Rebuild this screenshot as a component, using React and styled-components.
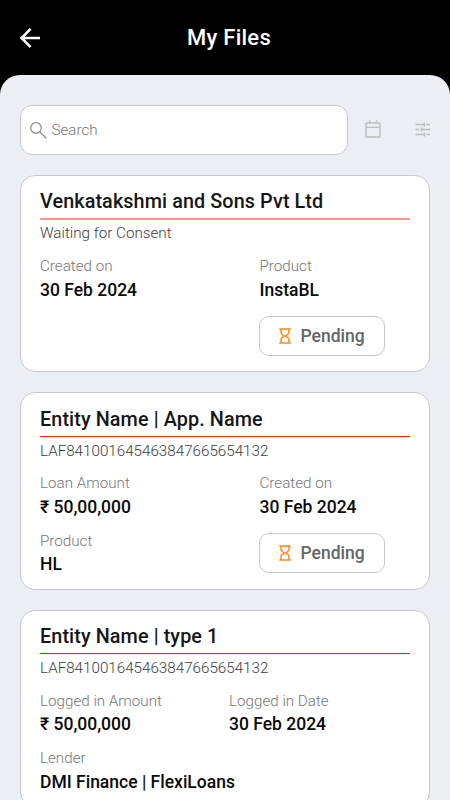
import styled, { createGlobalStyle } from "styled-components";

const files = [
  {
    title: "Venkatakshmi and Sons Pvt Ltd",
    subtitle: "Waiting for Consent",
    softLine: true,
    column: 219.5,
    fields: [
      { label: "Created on", value: "30 Feb 2024" },
      { label: "Product", value: "InstaBL" },
      {},
      { status: "Pending" },
    ],
  },
  {
    title: "Entity Name | App. Name",
    subtitle: "LAF841001645463847665654132",
    column: 219.5,
    fields: [
      { label: "Loan Amount", value: "₹ 50,00,000" },
      { label: "Created on", value: "30 Feb 2024" },
      { label: "Product", value: "HL" },
      { status: "Pending" },
    ],
  },
  {
    title: "Entity Name | type 1",
    subtitle: "LAF841001645463847665654132",
    column: 189,
    fields: [
      { label: "Logged in Amount", value: "₹ 50,00,000" },
      { label: "Logged in Date", value: "30 Feb 2024" },
      { label: "Lender", value: "DMI Finance | FlexiLoans" },
    ],
  },
];

function BackIcon() {
  return (
    <svg width="20" height="20" viewBox="0 0 20 20" fill="none">
      <path
        d="M10.6 0.9L1.5 10L10.6 19.1M1.5 10H20"
        stroke="#fff"
        strokeWidth="2.5"
      />
    </svg>
  );
}

function SearchIcon() {
  return (
    <svg width="17" height="17" viewBox="0 0 17 17" fill="none">
      <circle cx="6" cy="6" r="5.3" stroke="#8a8a8a" strokeWidth="1.2" />
      <path d="M9.9 9.9L16.3 16.3" stroke="#8a8a8a" strokeWidth="1.3" />
    </svg>
  );
}

function CalendarIcon() {
  return (
    <svg width="16" height="18" viewBox="0 0 16 18" fill="none">
      <rect
        x="1"
        y="3"
        width="14"
        height="14"
        rx="0.8"
        stroke="#bdbdba"
        strokeWidth="1.4"
      />
      <path d="M1 7.4H15M4.6 0.5V3M11.6 0.5V3" stroke="#bdbdba" strokeWidth="1.3" />
    </svg>
  );
}

function FilterIcon() {
  return (
    <svg width="16" height="15" viewBox="0 0 16 15" fill="none">
      <path
        d="M0.5 2.5H9M11.5 2.5H15M0.5 7.5H4.5M7 7.5H15.5M0.5 12.5H9M11.5 12.5H15M9.4 0.5V4.5M6.7 5.5V9.5M9.4 10.5V14.5"
        stroke="#bdbdba"
        strokeWidth="1.5"
      />
    </svg>
  );
}

function HourglassIcon() {
  return (
    <svg width="12" height="16" viewBox="0 0 12 16" fill="none">
      <path
        d="M0.2 1H11.8M0.2 15H11.8M2 1V4.6C2 6.6 4.8 6.9 4.8 8C4.8 9.1 2 9.4 2 11.4V15M10 1V4.6C10 6.6 7.2 6.9 7.2 8C7.2 9.1 10 9.4 10 11.4V15M4.4 8H7.6"
        stroke="#ff8a12"
        strokeWidth="1.5"
      />
    </svg>
  );
}

function App() {
  return (
    <Wrapper>
      <GlobalStyle />
      <Header>
        <BackButton aria-label="Back">
          <BackIcon />
        </BackButton>
        <Heading>My Files</Heading>
      </Header>
      <Sheet>
        <Toolbar>
          <SearchBox>
            <SearchIcon />
            <SearchInput placeholder="Search" />
          </SearchBox>
          <Tools>
            <IconButton aria-label="Pick a date">
              <CalendarIcon />
            </IconButton>
            <IconButton aria-label="Filter">
              <FilterIcon />
            </IconButton>
          </Tools>
        </Toolbar>
        <List>
          {files.map((file) => (
            <Card key={file.title}>
              <Title $soft={file.softLine}>{file.title}</Title>
              <Subtitle>{file.subtitle}</Subtitle>
              <Fields $column={file.column}>
                {file.fields.map((field, i) =>
                  field.status ? (
                    <Status key={i}>
                      <HourglassIcon />
                      {field.status}
                    </Status>
                  ) : (
                    <Field key={i}>
                      <Label>{field.label}</Label>
                      <Value>{field.value}</Value>
                    </Field>
                  )
                )}
              </Fields>
            </Card>
          ))}
        </List>
      </Sheet>
    </Wrapper>
  );
}

const GlobalStyle = createGlobalStyle`
  * {
    box-sizing: border-box;
  }
  body {
    margin: 0;
    background: #000;
    font-family: Roboto, "Noto Sans", sans-serif;
  }
`;

const Wrapper = styled.div`
  display: flex;
  flex-direction: column;
  width: 450px;
  height: 800px;
  overflow: hidden;
  background: #000;
`;

const Header = styled.header`
  display: grid;
  grid-template-columns: 40px 1fr 40px;
  align-items: center;
  flex: none;
  height: 75px;
  padding: 0 20px;
`;

const BackButton = styled.button`
  display: flex;
  padding: 0;
  border: 0;
  background: none;
`;

const Heading = styled.h1`
  margin: 0;
  padding-left: 8px;
  color: #fff;
  font-size: 22px;
  font-weight: 500;
  letter-spacing: 0.25px;
  line-height: 26px;
  text-align: center;
`;

const Sheet = styled.main`
  flex: 1;
  min-height: 0;
  padding: 30px 20px 0;
  border-radius: 20px 20px 0 0;
  background: #ebeef3;
  overflow: hidden;
`;

const Toolbar = styled.div`
  display: flex;
  align-items: center;
  height: 50px;
`;

const SearchBox = styled.label`
  display: flex;
  align-items: center;
  gap: 4.5px;
  width: 328px;
  height: 50px;
  padding: 0 9px;
  border: 1px solid #c8c8c8;
  border-radius: 12px;
  background: #fff;
`;

const SearchInput = styled.input`
  flex: 1;
  min-width: 0;
  padding: 0;
  border: 0;
  outline: 0;
  font-family: inherit;
  font-size: 15.2px;
  font-weight: 300;
  &::placeholder {
    color: #777;
    opacity: 1;
  }
`;

const Tools = styled.div`
  display: flex;
  flex: 1;
  align-items: center;
  justify-content: space-between;
  margin: -2px -1px 0 17px;
`;

const IconButton = styled.button`
  display: flex;
  padding: 0;
  border: 0;
  background: none;
`;

const List = styled.div`
  display: flex;
  flex-direction: column;
  gap: 20px;
  padding-top: 20.2px;
`;

const Card = styled.article`
  flex: none;
  height: 197.3px;
  padding: 11.25px 19px 0;
  border: 1px solid #c8c8c8;
  border-radius: 15px;
  background: #fff;
`;

const Title = styled.h2`
  height: ${(props) => (props.$soft ? 33 : 32)}px;
  margin: 0 0 ${(props) => (props.$soft ? 4 : 5)}px;
  border-bottom: ${(props) =>
    props.$soft ? "2px solid #ff9488" : "1px solid #ff2a0c"};
  box-shadow: ${(props) => (props.$soft ? "none" : "0 1px 0 #ffe9e5")};
  color: #161616;
  font-size: 19.8px;
  font-weight: 500;
  letter-spacing: 0.1px;
  line-height: 30px;
  white-space: nowrap;
`;

const Subtitle = styled.p`
  margin: 0;
  color: #3c3c3c;
  font-size: 15.2px;
  font-weight: 300;
  line-height: 18px;
`;

const Fields = styled.div`
  display: grid;
  grid-template-columns: ${(props) => props.$column}px 1fr;
  grid-auto-rows: 45px;
  row-gap: 12.6px;
  margin-top: 14.75px;
`;

const Field = styled.div`
  display: flex;
  flex-direction: column;
  gap: 3.4px;
  white-space: nowrap;
`;

const Label = styled.span`
  color: #777;
  font-size: 15.2px;
  font-weight: 300;
  line-height: 19px;
`;

const Value = styled.span`
  color: #0a0a0a;
  font-size: 17.5px;
  font-weight: 500;
  line-height: 21px;
`;

const Status = styled.div`
  display: flex;
  align-items: center;
  gap: 9.5px;
  width: 126px;
  height: 40px;
  margin: 1px 0 0 -0.5px;
  padding-left: 19px;
  border: 1px solid #c8c8c8;
  border-radius: 10px;
  color: #666;
  font-size: 17.5px;
  font-weight: 500;
`;

export default App;
